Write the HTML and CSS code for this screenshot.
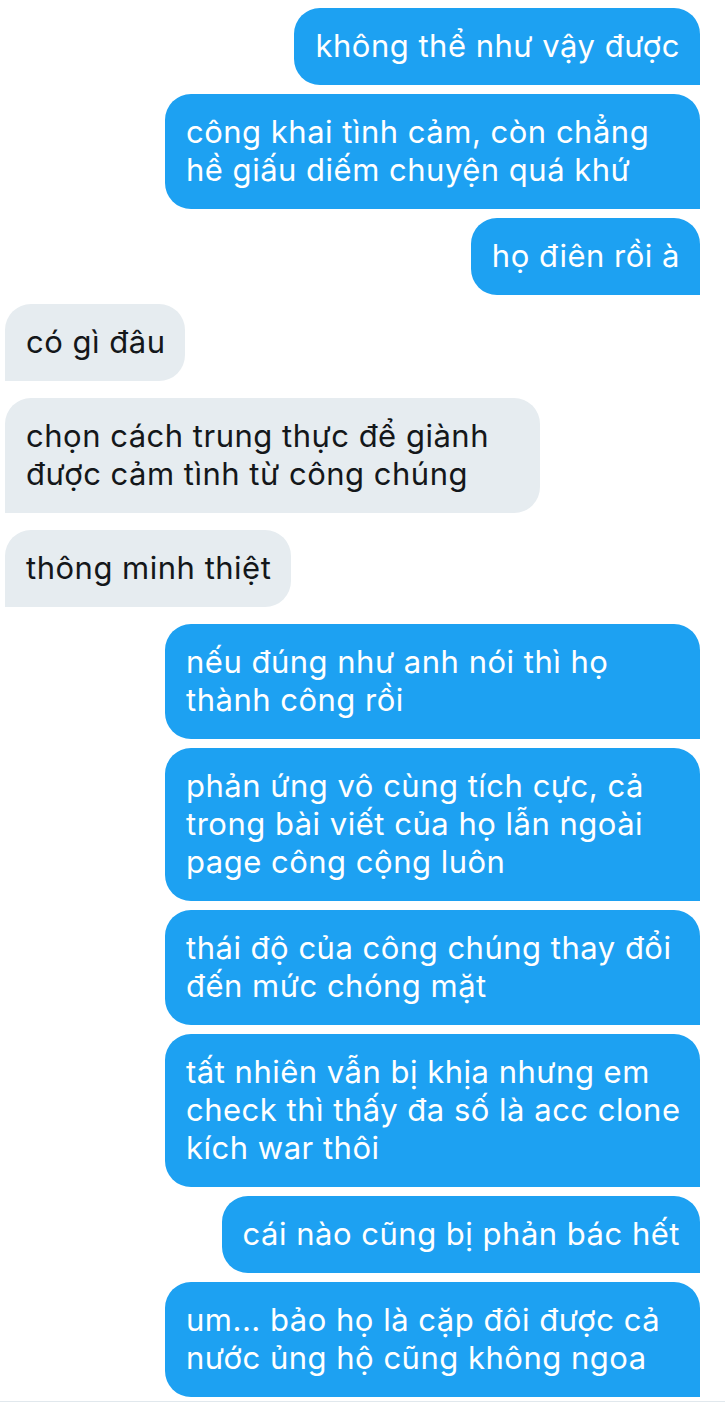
FILE: index.html
```html
<!DOCTYPE html>
<html lang="vi">
<head>
  <meta charset="UTF-8" />
  <meta name="viewport" content="width=device-width, initial-scale=1.0"/>
  <title>Tin nhắn</title>
  <link rel="stylesheet" href="styles.css">
</head>
<body>

  <div class="chat">
    <div class="msg sent">không thể như vậy được</div>
    <div class="msg sent wide">công khai tình cảm, còn chẳng<br>hề giấu diếm chuyện quá khứ</div>
    <div class="msg sent">họ điên rồi à</div>

    <div class="msg recv">có gì đâu</div>
    <div class="msg recv wide">chọn cách trung thực để giành<br>được cảm tình từ công chúng</div>
    <div class="msg recv">thông minh thiệt</div>

    <div class="msg sent wide">nếu đúng như anh nói thì họ<br>thành công rồi</div>
    <div class="msg sent wide">phản ứng vô cùng tích cực, cả<br>trong bài viết của họ lẫn ngoài<br>page công cộng luôn</div>
    <div class="msg sent wide">thái độ của công chúng thay đổi<br>đến mức chóng mặt</div>
    <div class="msg sent wide">tất nhiên vẫn bị khịa nhưng em<br>check thì thấy đa số là acc clone<br>kích war thôi</div>
    <div class="msg sent">cái nào cũng bị phản bác hết</div>
    <div class="msg sent wide">um... bảo họ là cặp đôi được cả<br>nước ủng hộ cũng không ngoa</div>
  </div>

  <div class="divider"></div>

</body>
</html>
```

FILE: styles.css
```css
* {
  margin: 0;
  padding: 0;
  box-sizing: border-box;
}

body {
  background: #fff;
  font-family: 'Inter', 'Noto Sans', sans-serif;
  width: 725px;
  height: 1410px;
  overflow: hidden;
}

.chat {
  display: flex;
  flex-direction: column;
  padding: 8px 25px 0 5px;
}

.msg {
  font-size: 31px;
  letter-spacing: 0.5px;
  line-height: 38px;
  padding: 19px 20px 20px 21px;
  border-radius: 26px;
  width: fit-content;
  max-width: 535px;
  margin-bottom: 9px;
  white-space: nowrap;
}

.sent {
  align-self: flex-end;
  background: #1da1f2;
  color: #fff;
  border-bottom-right-radius: 0;
}

.recv {
  align-self: flex-start;
  background: #e6ecf0;
  color: #14171a;
  border-bottom-left-radius: 0;
  margin-bottom: 17px;
}

.wide {
  width: 535px;
}

.divider {
  position: absolute;
  left: 0;
  right: 0;
  top: 1401px;
  height: 1px;
  background: #e1e8ed;
}
```
